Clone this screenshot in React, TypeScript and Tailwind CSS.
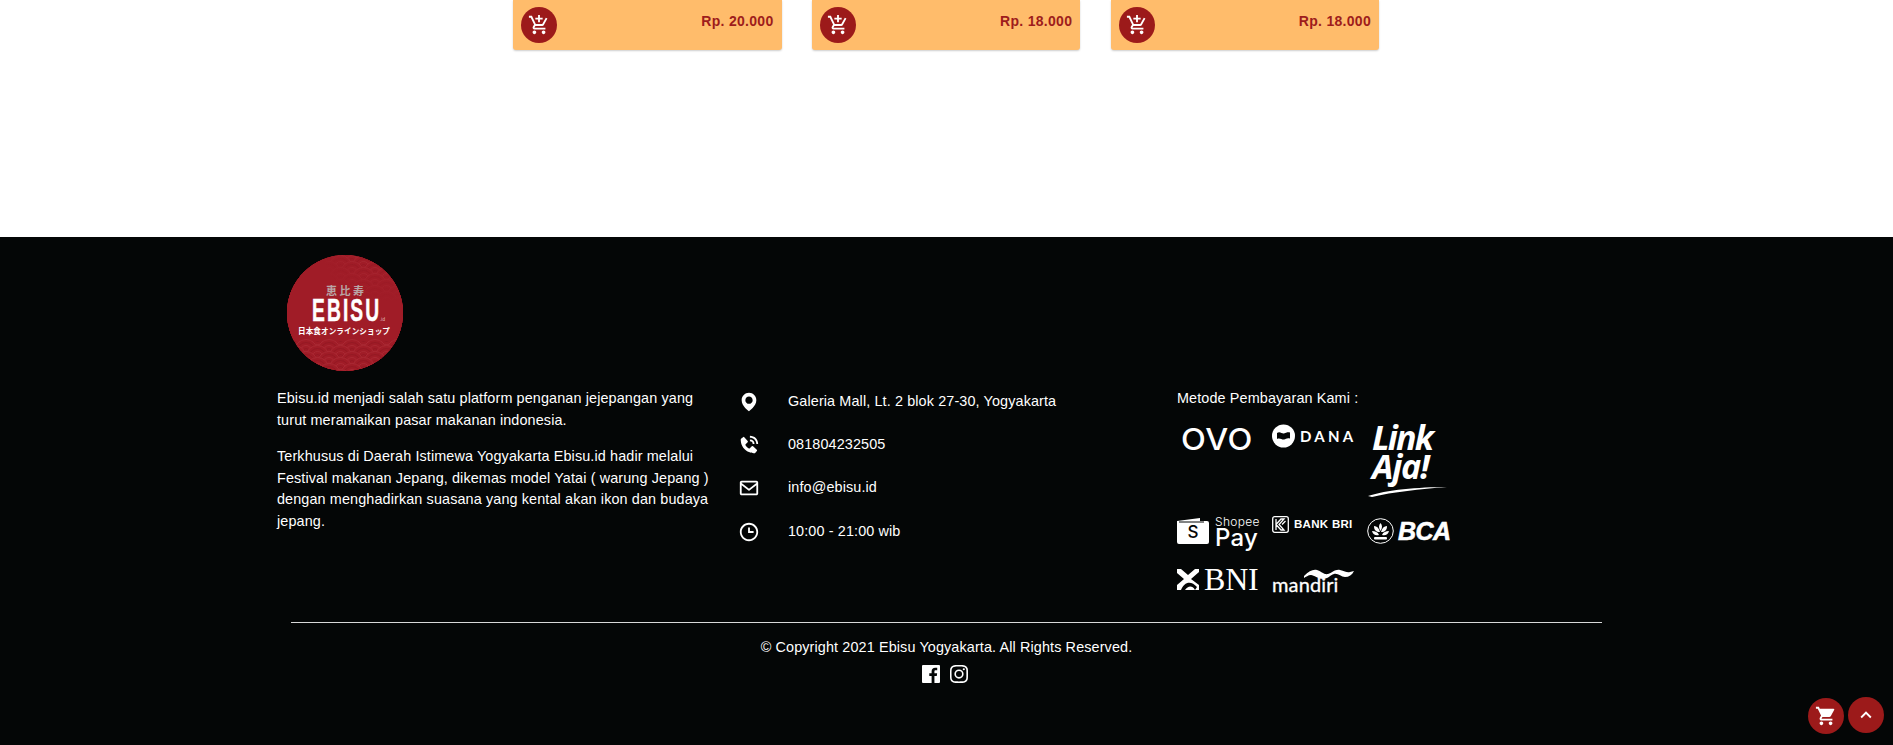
import React from "react";
import { MdOutlineAddShoppingCart, MdShoppingCart, MdKeyboardArrowUp } from "react-icons/md";
import { BiSolidMap, BiSolidPhoneCall, BiEnvelope, BiTime, BiLogoFacebookSquare, BiLogoInstagram } from "react-icons/bi";

function Card({ price }: { price: string }) {
  return (
    <div className="w-[268.5px] h-[50px] bg-[#ffbc6b] rounded-b-[3px] shadow-[0_1px_2px_rgba(0,0,0,0.2)] flex items-start justify-between pl-[8px] pr-[8px]">
      <div className="w-[36px] h-[36px] mt-[7px] rounded-full bg-[#9c1a1a] flex items-center justify-center text-white">
        <MdOutlineAddShoppingCart size={22} />
      </div>
      <span className="text-[14px] leading-[20px] font-bold tracking-[0.3px] text-[#9e1c1c] mt-[11px]">{price}</span>
    </div>
  );
}

function Scale({ x, y }: { x: number; y: number }) {
  return (
    <g>
      <circle cx={x} cy={y} r="11.5" fill="#a01c27" stroke="#ad2f39" strokeWidth="0.7" />
      <circle cx={x} cy={y} r="8.5" fill="none" stroke="#8f1822" strokeWidth="0.7" />
      <circle cx={x} cy={y} r="5.5" fill="none" stroke="#ad2f39" strokeWidth="0.7" />
      <circle cx={x} cy={y} r="2.5" fill="none" stroke="#8f1822" strokeWidth="0.7" />
    </g>
  );
}

function Logo() {
  const top: React.ReactNode[] = [];
  for (let r = 0; r < 14; r++) {
    for (let c = 0; c < 7; c++) {
      top.push(<Scale key={`${r}-${c}`} x={c * 23 + (r % 2 ? 11.5 : 0) - 4} y={r * 6 + 6} />);
    }
  }
  const bottom: React.ReactNode[] = [];
  for (let r = 0; r < 7; r++) {
    for (let c = 0; c < 7; c++) {
      bottom.push(<Scale key={`${r}-${c}`} x={c * 23 + (r % 2 ? 11.5 : 0) - 4} y={r * 6 + 96} />);
    }
  }
  return (
    <svg width="116" height="116" viewBox="0 0 116 116" className="block ml-[10px]">
      <defs>
        <clipPath id="lc"><circle cx="58" cy="58" r="58" /></clipPath>
        <linearGradient id="fd" x1="0" x2="1" y1="0.5" y2="0.2">
          <stop offset="0.4" stopColor="#a01c27" stopOpacity="1" />
          <stop offset="0.7" stopColor="#a01c27" stopOpacity="0" />
        </linearGradient>
        <linearGradient id="fv" x1="0" x2="0" y1="0" y2="1">
          <stop offset="0" stopColor="#a01c27" stopOpacity="0" />
          <stop offset="0.55" stopColor="#a01c27" stopOpacity="1" />
          <stop offset="1" stopColor="#a01c27" stopOpacity="1" />
        </linearGradient>
      </defs>
      <circle cx="58" cy="58" r="58" fill="#a01c27" />
      <g clipPath="url(#lc)">
        {top}
        <rect x="0" y="0" width="116" height="86" fill="url(#fd)" />
        <rect x="0" y="0" width="116" height="86" fill="url(#fv)" />
        {bottom}
      </g>
      <text x="39" y="40" textLength="38" lengthAdjust="spacing" fontSize="11" fontWeight="700" fill="#b9a6a6" fontFamily="'Noto Sans CJK JP',sans-serif">恵比寿</text>
      <text transform="translate(25 66) scale(0.62 1)" fontSize="31" fontWeight="700" letterSpacing="3.4" fill="#fff" stroke="#fff" strokeWidth="0.5" fontFamily="'Liberation Sans',sans-serif">EBISU</text>
      <text x="93" y="66" fontSize="4.5" fill="#e0c0c0" fontFamily="'Liberation Sans',sans-serif">.id</text>
      <text x="11" y="79" textLength="92" lengthAdjust="spacingAndGlyphs" fontSize="8" fontWeight="700" fill="#fff" fontFamily="'Noto Sans CJK JP',sans-serif">日本食オンラインショップ</text>
    </svg>
  );
}

function Contact({ icon, text }: { icon: React.ReactNode; text: string }) {
  return (
    <div className="flex items-center h-[43.3px]">
      <div className="w-[22px] flex justify-center text-white">{icon}</div>
      <span className="ml-[28px]">{text}</span>
    </div>
  );
}

function Ovo() {
  return <div className="ml-[4px] mt-[3px] text-[30px] leading-[30px] font-medium tracking-[0.5px] text-white font-['Inter',sans-serif] origin-left scale-x-[1.08]">OVO</div>;
}

function Dana() {
  return (
    <div className="flex items-center gap-[5px]">
      <svg width="23" height="24" viewBox="0 0 23 24" className="shrink-0">
        <circle cx="11.5" cy="12" r="11.5" fill="#fff" />
        <path d="M5 9c3-2 5 1 7 0.5s3-1.5 6-1v6c-3-1-4 .5-6 1s-4-2-7-.5z" fill="#040606" />
      </svg>
      <span className="text-[15px] leading-none font-bold tracking-[3.2px] text-white font-['Lato',sans-serif]">DANA</span>
    </div>
  );
}

function LinkAja() {
  return (
    <div className="text-white font-bold italic font-['Open_Sans',sans-serif] ml-[4px] mt-[2px]">
      <div className="text-[34px] leading-[29px] tracking-[-1.8px]">Link</div>
      <div className="text-[34px] leading-[29px] tracking-[-1.2px]">Aja!</div>
      <svg width="80" height="11" viewBox="0 0 80 11" className="block ml-[-4px] mt-[5px]">
        <path d="M0 10C18 4 50 1 79 1 52 3 25 6 4 11z" fill="#fff" />
      </svg>
    </div>
  );
}

function ShopeePay() {
  return (
    <div className="flex items-start gap-[6px] text-white font-['Inter',sans-serif]">
      <div className="relative w-[32px] h-[26px] mt-[2px] flex items-center justify-center">
        <svg width="32" height="26" viewBox="0 0 32 26" className="absolute inset-0">
          <path d="M0 3 23 0v3h7a2 2 0 0 1 2 2v19a2 2 0 0 1-2 2H2a2 2 0 0 1-2-2z" fill="#fff" />
          <path d="M2 4h25" stroke="#040606" strokeWidth="1" />
        </svg>
        <span className="relative text-[#040606] text-[17px] leading-none font-medium mt-[3px]">S</span>
      </div>
      <div>
        <div className="text-[12px] leading-[12px] font-light tracking-[0.3px]">Shopee</div>
        <div className="text-[24px] leading-[20px] font-medium tracking-[0.2px]">Pay</div>
      </div>
    </div>
  );
}

function Bri() {
  return (
    <div className="flex items-center gap-[5px] text-white">
      <svg width="17" height="17" viewBox="0 0 17 17" fill="none" stroke="#fff" strokeWidth="1.3">
        <rect x="0.7" y="0.7" width="15.6" height="15.6" rx="2" />
        <path d="M4 3v11M4 8.5 9 3h3L7 8.5 12 14H9zM10 8.5 13.5 5" />
      </svg>
      <span className="text-[11.5px] leading-none font-bold tracking-[0.3px] font-['Liberation_Sans',sans-serif] whitespace-nowrap">BANK BRI</span>
    </div>
  );
}

function Bca() {
  return (
    <div className="flex items-center gap-[4px] ml-[-1px] text-white">
      <svg width="27" height="26" viewBox="0 0 27 26">
        <ellipse cx="13.5" cy="13" rx="12.8" ry="12.3" fill="none" stroke="#fff" strokeWidth="1" />
        <path d="M13.5 5c2 2 2 5 0 8-2-3-2-6 0-8zM7 8c3 0 5 2 6 6-4 0-6-2-6-6zM20 8c-3 0-5 2-6 6 4 0 6-2 6-6zM5 13c3 0 6 1 7 4-3 1-6 0-7-4zM22 13c-3 0-6 1-7 4 3 1 6 0 7-4z" fill="#fff" />
        <rect x="7" y="19" width="13" height="2.4" rx="1" fill="#fff" />
      </svg>
      <span className="text-[25px] leading-none font-bold italic tracking-[-0.6px] font-['Liberation_Sans',sans-serif] [-webkit-text-stroke:0.6px_#fff]">BCA</span>
    </div>
  );
}

function Bni() {
  return (
    <div className="flex items-center gap-[5px] text-white">
      <svg width="22" height="21" viewBox="0 0 22 21">
        <rect width="22" height="21" fill="#fff" />
        <path d="M0 4 7 10 0 16zM4 0l7 6 7-6zM22 3l-8 7 8 6zM4 21c3-8 10-10 16-3l-2 3c-3-5-7-4-10 0z" fill="#040606" />
      </svg>
      <span className="text-[32px] leading-[21px] font-normal tracking-[-0.2px] font-['Liberation_Serif',serif]">BNI</span>
    </div>
  );
}

function Mandiri() {
  return (
    <div className="relative w-[81px] h-[24px] text-white">
      <svg width="50" height="10" viewBox="0 0 50 10" className="absolute left-[32px] top-[0px]">
        <path d="M0 7C5 2 9 0 13 1s7 5 11 4 7-5 12-4 7 3 10 2l4-1c-2 4-5 6-9 6s-7-4-11-3-6 5-11 5S10 6 7 6s-5 2-7 3z" fill="#fff" />
      </svg>
      <span className="absolute left-0 top-[5px] text-[20px] leading-[20px] font-normal font-['Lato',sans-serif] [-webkit-text-stroke:0.3px_#fff]">mandiri</span>
    </div>
  );
}

export default function App() {
  return (
    <div className="relative h-[745px] overflow-hidden bg-white font-['Liberation_Sans',Arial,sans-serif] text-[14.4px] leading-[21.6px] tracking-[0.12px] text-white">
      <div className="h-[237px] pl-[513px] flex gap-[30.25px] items-start">
        <Card price="Rp. 20.000" />
        <Card price="Rp. 18.000" />
        <Card price="Rp. 18.000" />
      </div>

      <footer className="h-[508px] bg-[#040606] pt-[18px]">
        <div className="pl-[277px]">
          <Logo />
          <div className="flex mt-[17px]">
            <div className="w-[461px] pr-[18px]">
              <p>Ebisu.id menjadi salah satu platform penganan jejepangan yang turut meramaikan pasar makanan indonesia.</p>
              <p className="mt-[15px]">Terkhusus di Daerah Istimewa Yogyakarta Ebisu.id hadir melalui Festival makanan Jepang, dikemas model Yatai ( warung Jepang ) dengan menghadirkan suasana yang kental akan ikon dan budaya jepang.</p>
            </div>
            <div className="w-[439px] mt-[-8px]">
              <Contact icon={<BiSolidMap size={24} />} text="Galeria Mall, Lt. 2 blok 27-30, Yogyakarta" />
              <Contact icon={<BiSolidPhoneCall size={24} />} text="081804232505" />
              <Contact icon={<BiEnvelope size={24} />} text="info@ebisu.id" />
              <Contact icon={<BiTime size={24} />} text="10:00 - 21:00 wib" />
            </div>
            <div>
              <div className="h-[21px]">Metode Pembayaran Kami :</div>
              <div className="grid grid-cols-[95px_96px_90px] grid-rows-[95px_53px_30px] items-start mt-[12px]">
                <Ovo />
                <div className="mt-[3px]"><Dana /></div>
                <LinkAja />
                <ShopeePay />
                <div><Bri /></div>
                <div className="mt-[2px]"><Bca /></div>
                <Bni />
                <Mandiri />
              </div>
            </div>
          </div>
        </div>

        <div className="mx-[291px] mt-[23px] border-t border-[#d8d8d8] text-center pt-[14px]">
          <div>© Copyright 2021 Ebisu Yogyakarta. All Rights Reserved.</div>
          <div className="flex justify-center gap-[4px] mt-[3px] pr-[4px]">
            <BiLogoFacebookSquare size={24} />
            <BiLogoInstagram size={24} />
          </div>
        </div>
      </footer>

      <div className="absolute left-[1808px] top-[698px] w-[36px] h-[36px] rounded-full bg-[#9c1a1a] flex items-center justify-center">
        <MdShoppingCart size={22} />
      </div>
      <div className="absolute left-[1848px] top-[697px] w-[36px] h-[36px] rounded-full bg-[#9c1a1a] flex items-center justify-center">
        <MdKeyboardArrowUp size={22} />
      </div>
    </div>
  );
}
